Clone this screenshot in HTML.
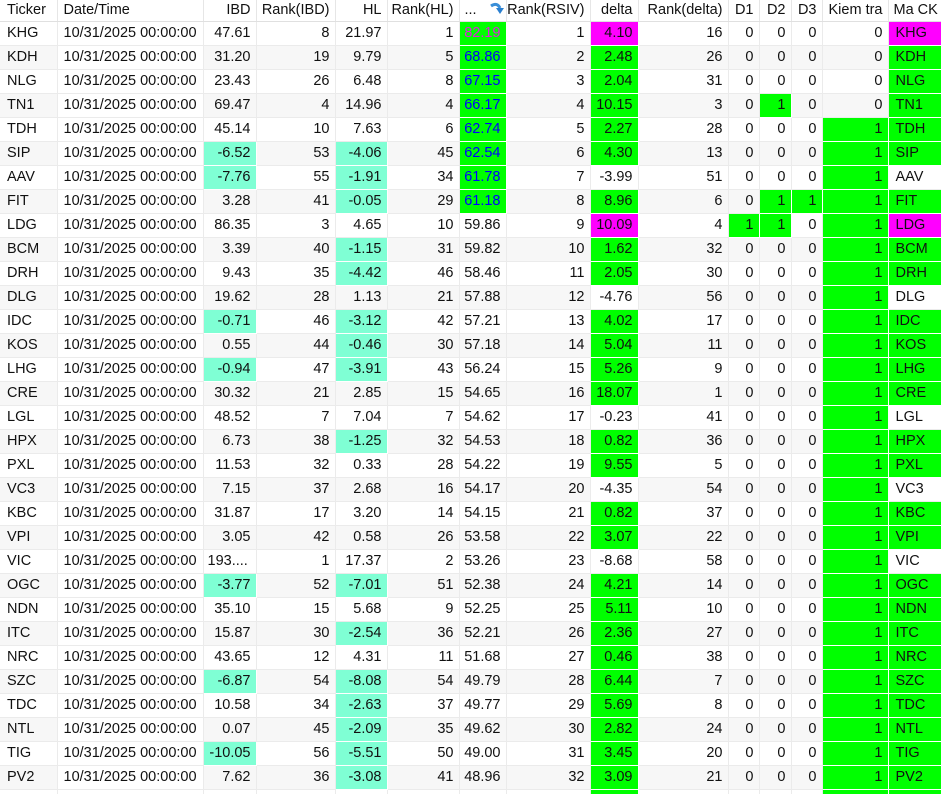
<!DOCTYPE html>
<html><head><meta charset="utf-8">
<style>
html,body{margin:0;padding:0;background:#fff;width:941px;height:794px;overflow:hidden}
table{border-collapse:collapse;table-layout:fixed;width:941px;font-family:"Liberation Sans",sans-serif;font-size:14.5px;color:#111}
td,th{height:24px;padding:0 5px 0 0;border-right:1px solid #ebebeb;border-bottom:1px solid #ebebeb;text-align:right;white-space:nowrap;overflow:hidden;box-sizing:border-box}
th{height:21px;font-weight:normal;background:#fff;border-bottom:1px solid #e0e0e0;border-right:1px solid #e6e6e6}
td.l,th.l{text-align:left;padding-left:7px}
td.d,th.d{text-align:left;padding-left:6px}
tr.e td{background:#f7f7f7}
tr td.d{background:#fff}
tr td.g{background:#00ff00;border:1px solid #fff}
tr td.m{background:#ff00ff;border:1px solid #fff}
tr td.a{background:#7fffd4;border:1px solid #fff}
tr td.w{background:#fff}
.b{color:#0000ff}.mt{color:#e020e0}
th.t{text-align:left;padding-left:5px}
</style></head><body>
<table>
<colgroup><col style="width:57px"><col style="width:146px"><col style="width:53px"><col style="width:79px"><col style="width:52px"><col style="width:72px"><col style="width:47px"><col style="width:84px"><col style="width:48px"><col style="width:90px"><col style="width:31px"><col style="width:32px"><col style="width:31px"><col style="width:66px"><col style="width:53px"></colgroup>
<tr><th class="l">Ticker</th><th class="d">Date/Time</th><th>IBD</th><th>Rank(IBD)</th><th>HL</th><th>Rank(HL)</th><th class="t">... <svg width="16" height="14" viewBox="0 0 16 14" style="vertical-align:-2px;margin-left:8px"><path d="M2 4 Q8 0 11 6" stroke="#3a8fd8" stroke-width="3" fill="none"/><path d="M7 6 L15 6 L11 12 Z" fill="#2a7fd0"/></svg></th><th>Rank(RSIV)</th><th>delta</th><th>Rank(delta)</th><th>D1</th><th>D2</th><th>D3</th><th>Kiem tra</th><th class="t">Ma CK</th></tr>
<tr><td class="l">KHG</td><td class="d">10/31/2025 00:00:00</td><td>47.61</td><td>8</td><td>21.97</td><td>1</td><td class="g mt">82.19</td><td>1</td><td class="m">4.10</td><td>16</td><td>0</td><td>0</td><td>0</td><td>0</td><td class="m l">KHG</td></tr>
<tr class="e"><td class="l">KDH</td><td class="d">10/31/2025 00:00:00</td><td>31.20</td><td>19</td><td>9.79</td><td>5</td><td class="g b">68.86</td><td>2</td><td class="g">2.48</td><td>26</td><td>0</td><td>0</td><td>0</td><td>0</td><td class="g l">KDH</td></tr>
<tr><td class="l">NLG</td><td class="d">10/31/2025 00:00:00</td><td>23.43</td><td>26</td><td>6.48</td><td>8</td><td class="g b">67.15</td><td>3</td><td class="g">2.04</td><td>31</td><td>0</td><td>0</td><td>0</td><td>0</td><td class="g l">NLG</td></tr>
<tr class="e"><td class="l">TN1</td><td class="d">10/31/2025 00:00:00</td><td>69.47</td><td>4</td><td>14.96</td><td>4</td><td class="g b">66.17</td><td>4</td><td class="g">10.15</td><td>3</td><td>0</td><td class="g">1</td><td>0</td><td>0</td><td class="g l">TN1</td></tr>
<tr><td class="l">TDH</td><td class="d">10/31/2025 00:00:00</td><td>45.14</td><td>10</td><td>7.63</td><td>6</td><td class="g b">62.74</td><td>5</td><td class="g">2.27</td><td>28</td><td>0</td><td>0</td><td>0</td><td class="g">1</td><td class="g l">TDH</td></tr>
<tr class="e"><td class="l">SIP</td><td class="d">10/31/2025 00:00:00</td><td class="a">-6.52</td><td>53</td><td class="a">-4.06</td><td>45</td><td class="g b">62.54</td><td>6</td><td class="g">4.30</td><td>13</td><td>0</td><td>0</td><td>0</td><td class="g">1</td><td class="g l">SIP</td></tr>
<tr><td class="l">AAV</td><td class="d">10/31/2025 00:00:00</td><td class="a">-7.76</td><td>55</td><td class="a">-1.91</td><td>34</td><td class="g b">61.78</td><td>7</td><td class="w">-3.99</td><td>51</td><td>0</td><td>0</td><td>0</td><td class="g">1</td><td class="w l">AAV</td></tr>
<tr class="e"><td class="l">FIT</td><td class="d">10/31/2025 00:00:00</td><td>3.28</td><td>41</td><td class="a">-0.05</td><td>29</td><td class="g b">61.18</td><td>8</td><td class="g">8.96</td><td>6</td><td>0</td><td class="g">1</td><td class="g">1</td><td class="g">1</td><td class="g l">FIT</td></tr>
<tr><td class="l">LDG</td><td class="d">10/31/2025 00:00:00</td><td>86.35</td><td>3</td><td>4.65</td><td>10</td><td class="w">59.86</td><td>9</td><td class="m">10.09</td><td>4</td><td class="g">1</td><td class="g">1</td><td>0</td><td class="g">1</td><td class="m l">LDG</td></tr>
<tr class="e"><td class="l">BCM</td><td class="d">10/31/2025 00:00:00</td><td>3.39</td><td>40</td><td class="a">-1.15</td><td>31</td><td>59.82</td><td>10</td><td class="g">1.62</td><td>32</td><td>0</td><td>0</td><td>0</td><td class="g">1</td><td class="g l">BCM</td></tr>
<tr><td class="l">DRH</td><td class="d">10/31/2025 00:00:00</td><td>9.43</td><td>35</td><td class="a">-4.42</td><td>46</td><td>58.46</td><td>11</td><td class="g">2.05</td><td>30</td><td>0</td><td>0</td><td>0</td><td class="g">1</td><td class="g l">DRH</td></tr>
<tr class="e"><td class="l">DLG</td><td class="d">10/31/2025 00:00:00</td><td>19.62</td><td>28</td><td>1.13</td><td>21</td><td>57.88</td><td>12</td><td class="w">-4.76</td><td>56</td><td>0</td><td>0</td><td>0</td><td class="g">1</td><td class="w l">DLG</td></tr>
<tr><td class="l">IDC</td><td class="d">10/31/2025 00:00:00</td><td class="a">-0.71</td><td>46</td><td class="a">-3.12</td><td>42</td><td>57.21</td><td>13</td><td class="g">4.02</td><td>17</td><td>0</td><td>0</td><td>0</td><td class="g">1</td><td class="g l">IDC</td></tr>
<tr class="e"><td class="l">KOS</td><td class="d">10/31/2025 00:00:00</td><td>0.55</td><td>44</td><td class="a">-0.46</td><td>30</td><td>57.18</td><td>14</td><td class="g">5.04</td><td>11</td><td>0</td><td>0</td><td>0</td><td class="g">1</td><td class="g l">KOS</td></tr>
<tr><td class="l">LHG</td><td class="d">10/31/2025 00:00:00</td><td class="a">-0.94</td><td>47</td><td class="a">-3.91</td><td>43</td><td>56.24</td><td>15</td><td class="g">5.26</td><td>9</td><td>0</td><td>0</td><td>0</td><td class="g">1</td><td class="g l">LHG</td></tr>
<tr class="e"><td class="l">CRE</td><td class="d">10/31/2025 00:00:00</td><td>30.32</td><td>21</td><td>2.85</td><td>15</td><td>54.65</td><td>16</td><td class="g">18.07</td><td>1</td><td>0</td><td>0</td><td>0</td><td class="g">1</td><td class="g l">CRE</td></tr>
<tr><td class="l">LGL</td><td class="d">10/31/2025 00:00:00</td><td>48.52</td><td>7</td><td>7.04</td><td>7</td><td>54.62</td><td>17</td><td class="w">-0.23</td><td>41</td><td>0</td><td>0</td><td>0</td><td class="g">1</td><td class="w l">LGL</td></tr>
<tr class="e"><td class="l">HPX</td><td class="d">10/31/2025 00:00:00</td><td>6.73</td><td>38</td><td class="a">-1.25</td><td>32</td><td>54.53</td><td>18</td><td class="g">0.82</td><td>36</td><td>0</td><td>0</td><td>0</td><td class="g">1</td><td class="g l">HPX</td></tr>
<tr><td class="l">PXL</td><td class="d">10/31/2025 00:00:00</td><td>11.53</td><td>32</td><td>0.33</td><td>28</td><td>54.22</td><td>19</td><td class="g">9.55</td><td>5</td><td>0</td><td>0</td><td>0</td><td class="g">1</td><td class="g l">PXL</td></tr>
<tr class="e"><td class="l">VC3</td><td class="d">10/31/2025 00:00:00</td><td>7.15</td><td>37</td><td>2.68</td><td>16</td><td>54.17</td><td>20</td><td class="w">-4.35</td><td>54</td><td>0</td><td>0</td><td>0</td><td class="g">1</td><td class="w l">VC3</td></tr>
<tr><td class="l">KBC</td><td class="d">10/31/2025 00:00:00</td><td>31.87</td><td>17</td><td>3.20</td><td>14</td><td>54.15</td><td>21</td><td class="g">0.82</td><td>37</td><td>0</td><td>0</td><td>0</td><td class="g">1</td><td class="g l">KBC</td></tr>
<tr class="e"><td class="l">VPI</td><td class="d">10/31/2025 00:00:00</td><td>3.05</td><td>42</td><td>0.58</td><td>26</td><td>53.58</td><td>22</td><td class="g">3.07</td><td>22</td><td>0</td><td>0</td><td>0</td><td class="g">1</td><td class="g l">VPI</td></tr>
<tr><td class="l">VIC</td><td class="d">10/31/2025 00:00:00</td><td style="text-align:left;padding-left:4px">193....</td><td>1</td><td>17.37</td><td>2</td><td>53.26</td><td>23</td><td class="w">-8.68</td><td>58</td><td>0</td><td>0</td><td>0</td><td class="g">1</td><td class="w l">VIC</td></tr>
<tr class="e"><td class="l">OGC</td><td class="d">10/31/2025 00:00:00</td><td class="a">-3.77</td><td>52</td><td class="a">-7.01</td><td>51</td><td>52.38</td><td>24</td><td class="g">4.21</td><td>14</td><td>0</td><td>0</td><td>0</td><td class="g">1</td><td class="g l">OGC</td></tr>
<tr><td class="l">NDN</td><td class="d">10/31/2025 00:00:00</td><td>35.10</td><td>15</td><td>5.68</td><td>9</td><td>52.25</td><td>25</td><td class="g">5.11</td><td>10</td><td>0</td><td>0</td><td>0</td><td class="g">1</td><td class="g l">NDN</td></tr>
<tr class="e"><td class="l">ITC</td><td class="d">10/31/2025 00:00:00</td><td>15.87</td><td>30</td><td class="a">-2.54</td><td>36</td><td>52.21</td><td>26</td><td class="g">2.36</td><td>27</td><td>0</td><td>0</td><td>0</td><td class="g">1</td><td class="g l">ITC</td></tr>
<tr><td class="l">NRC</td><td class="d">10/31/2025 00:00:00</td><td>43.65</td><td>12</td><td>4.31</td><td>11</td><td>51.68</td><td>27</td><td class="g">0.46</td><td>38</td><td>0</td><td>0</td><td>0</td><td class="g">1</td><td class="g l">NRC</td></tr>
<tr class="e"><td class="l">SZC</td><td class="d">10/31/2025 00:00:00</td><td class="a">-6.87</td><td>54</td><td class="a">-8.08</td><td>54</td><td>49.79</td><td>28</td><td class="g">6.44</td><td>7</td><td>0</td><td>0</td><td>0</td><td class="g">1</td><td class="g l">SZC</td></tr>
<tr><td class="l">TDC</td><td class="d">10/31/2025 00:00:00</td><td>10.58</td><td>34</td><td class="a">-2.63</td><td>37</td><td>49.77</td><td>29</td><td class="g">5.69</td><td>8</td><td>0</td><td>0</td><td>0</td><td class="g">1</td><td class="g l">TDC</td></tr>
<tr class="e"><td class="l">NTL</td><td class="d">10/31/2025 00:00:00</td><td>0.07</td><td>45</td><td class="a">-2.09</td><td>35</td><td>49.62</td><td>30</td><td class="g">2.82</td><td>24</td><td>0</td><td>0</td><td>0</td><td class="g">1</td><td class="g l">NTL</td></tr>
<tr><td class="l">TIG</td><td class="d">10/31/2025 00:00:00</td><td class="a">-10.05</td><td>56</td><td class="a">-5.51</td><td>50</td><td>49.00</td><td>31</td><td class="g">3.45</td><td>20</td><td>0</td><td>0</td><td>0</td><td class="g">1</td><td class="g l">TIG</td></tr>
<tr class="e"><td class="l">PV2</td><td class="d">10/31/2025 00:00:00</td><td>7.62</td><td>36</td><td class="a">-3.08</td><td>41</td><td>48.96</td><td>32</td><td class="g">3.09</td><td>21</td><td>0</td><td>0</td><td>0</td><td class="g">1</td><td class="g l">PV2</td></tr>
<tr><td class="l"></td><td class="d"></td><td></td><td></td><td></td><td></td><td></td><td></td><td class="g"></td><td></td><td></td><td></td><td></td><td class="g"></td><td class="g l"></td></tr>
</table>
</body></html>
